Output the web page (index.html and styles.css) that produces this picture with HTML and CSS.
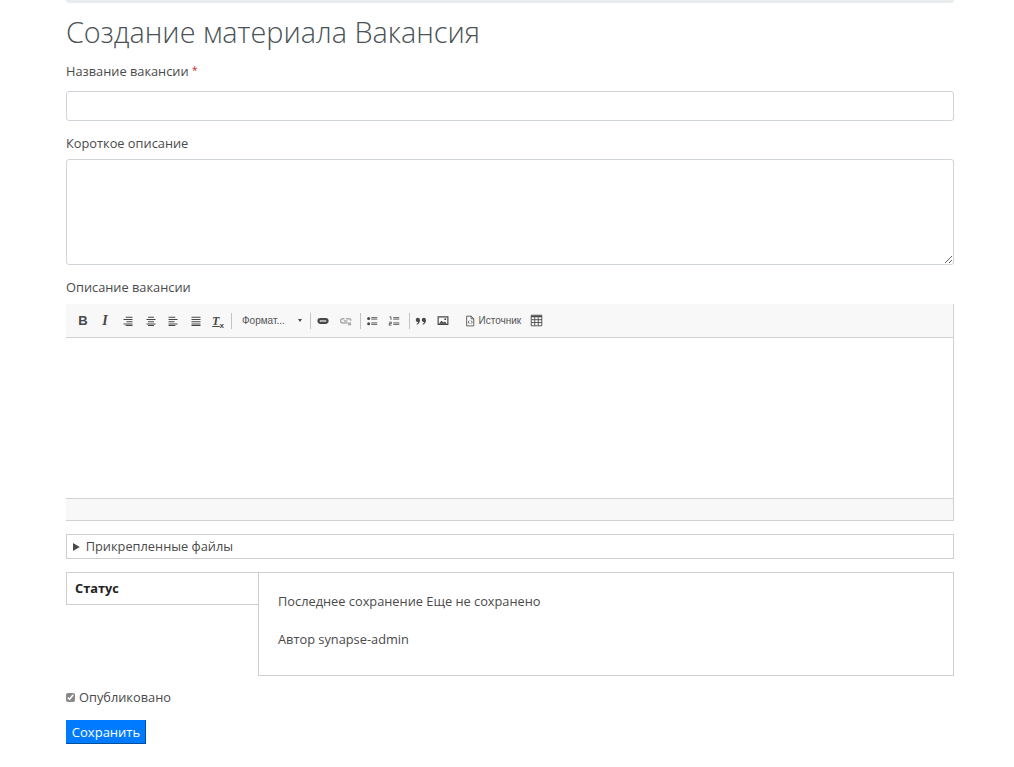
FILE: index.html
```html
<!DOCTYPE html>
<html lang="ru">
<head>
<meta charset="utf-8">
<title>Создание материала Вакансия</title>
<link rel="stylesheet" href="styles.css">
</head>
<body>
<main class="page">
  <div class="topbar"></div>
  <h1 class="title">Создание материала Вакансия</h1>
  <form class="form">
    <label class="label label-name" for="f-name">Название вакансии <span class="req">*</span></label>
    <input class="input" id="f-name" type="text">
    <label class="label label-short" for="f-short">Короткое описание</label>
    <textarea class="textarea" id="f-short"></textarea>
    <div class="label label-desc">Описание вакансии</div>
    <div class="editor">
      <div class="toolbar">
        <span class="tb tb-b">B</span>
        <span class="tb tb-i">I</span>
        <svg class="ic ic-first" viewBox="0 0 16 16"><path d="M5 3h9M2 6h12M6 9h8M2 12h12M5 14h9" class="ln"/></svg>
        <svg class="ic" viewBox="0 0 16 16"><path d="M4 3h8M2 6h12M4 9h8M2 12h12M4 14h8" class="ln"/></svg>
        <svg class="ic" viewBox="0 0 16 16"><path d="M2 3h9M2 6h12M2 9h8M2 12h12M2 14h9" class="ln"/></svg>
        <svg class="ic" viewBox="0 0 16 16"><path d="M2 3h12M2 6h12M2 9h12M2 12h12M2 14h12" class="ln"/></svg>
        <span class="tb tb-clear">T<sub class="tb-x">x</sub></span>
        <i class="sep sep-a"></i>
        <span class="combo">Формат...</span>
        <span class="caret"></span>
        <i class="sep sep-b"></i>
        <svg class="ic" viewBox="0 0 16 16"><path d="M4.500 5.500H11.500a2.500 2.500 0 0 1 0 5H4.500a2.500 2.500 0 0 1 0-5z" class="lk"/><path d="M5 8h6" class="lkm"/></svg>
        <svg class="ic ic-off" viewBox="0 0 16 16"><path d="M6 5H3.500a2.500 2.500 0 0 0 0 5.500h6.500M8 5h4a2.500 2.500 0 0 1 2.500 2.500M5 8h5M11 10l3.500 3.500M14.500 10L11 13.500" class="lk2"/></svg>
        <i class="sep sep-c"></i>
        <svg class="ic ic-list" viewBox="0 0 16 16"><circle cx="3.500" cy="4.500" r="2"/><circle cx="3.500" cy="11.500" r="2"/><path d="M7 3.500h8M7 5.500h8M7 10.500h8M7 12.500h8" class="thin"/></svg>
        <svg class="ic ic-list" viewBox="0 0 16 16"><path d="M2 2.500h2v4M1.500 9.500h3v2h-3v2h3" class="thin"/><path d="M7 3.500h8M7 5.500h8M7 10.500h8M7 12.500h8" class="thin"/></svg>
        <i class="sep sep-d"></i>
        <svg class="ic" viewBox="0 0 16 16"><circle cx="3.800" cy="6.500" r="2.800"/><path d="M6.600 6.500c0 3-1.500 5.500-4 6.500l-.6-1c1.500-.8 2-2 2-3.500z"/><circle cx="11.800" cy="6.500" r="2.800"/><path d="M14.600 6.500c0 3-1.500 5.500-4 6.500l-.6-1c1.500-.8 2-2 2-3.500z"/></svg>
        <svg class="ic ic-img" viewBox="0 0 16 16"><path d="M1.500 2.500h13v10h-13z" class="box"/><path d="M2.500 11.500l3.500-4 2.500 2.500 2-1.500 2.500 3z"/><circle cx="11" cy="5.500" r="1.300"/></svg>
        <svg class="ic ic-src" viewBox="0 0 16 16"><path d="M3.500 1.500h6l3.500 3.500v9.500h-9.500zM9.500 1.500v3.500h3.500" class="thin"/><path d="M7 7.500L5.500 9.500 7 11.500M9.500 7.500l1.500 2-1.500 2" class="thin"/></svg>
        <span class="srclabel">Источник</span>
        <svg class="ic ic-table" viewBox="0 0 16 16"><path d="M1.500 1.500h13v13h-13z" class="thin"/><path d="M1.500 2h13v2h-13z"/><path d="M1.500 7h13M1.500 10.500h13M5.800 4v10.500M10.200 4v10.500" class="thin"/></svg>
      </div>
      <div class="editor-body"></div>
      <div class="editor-foot"></div>
    </div>
    <details class="files"><summary class="files-sum">Прикрепленные файлы</summary></details>
    <div class="tabs">
      <div class="tab-col"><div class="tab">Статус</div></div>
      <div class="tab-pane">
        <p class="meta meta-first">Последнее сохранение Еще не сохранено</p>
        <p class="meta">Автор synapse-admin</p>
      </div>
    </div>
    <label class="check"><input class="checkbox" type="checkbox" checked> Опубликовано</label>
    <button class="save" type="button">Сохранить</button>
  </form>
</main>
</body>
</html>
```
FILE: styles.css
```css
* { box-sizing: border-box; }
html, body { margin: 0; padding: 0; background: #fff; }
body { font-family: "Open Sans", "Liberation Sans", sans-serif; font-size: 13px; color: #4a4a4a; overflow: hidden; }
.page { width: 888px; margin-left: 66px; }
.topbar { height: 3px; background: #e9ecef; border-radius: 0 0 3px 3px; }
.title { margin: 10px 0 0; font-size: 28.800px; font-weight: 300; line-height: 38px; color: #4a5256; }
.form { display: flex; flex-direction: column; align-items: stretch; }
.label { display: block; line-height: 18px; font-size: 12.800px; color: #4a4a4a; }
.label-name { margin-top: 11px; }
.label-short { margin-top: 13px; }
.label-desc { margin-top: 13px; }
.req { color: #c8252c; position: relative; top: -2px; font-size: 10px; }
.input { display: block; width: 100%; height: 30px; margin-top: 10px; border: 1px solid #ced4da; border-radius: 3px; background: #fff; }
.textarea { display: block; width: 100%; height: 106px; margin-top: 7px; border: 1px solid #ced4da; border-radius: 3px; background: #fff; }
.editor { margin-top: 8px; height: 217px; border-right: 1px solid #d1d1d1; border-bottom: 1px solid #d1d1d1; display: flex; flex-direction: column; }
.toolbar { height: 34px; flex: none; background: #f8f8f8; border-bottom: 1px solid #d1d1d1; display: flex; align-items: center; padding-left: 11px; color: #474747; }
.editor-body { flex: 1; background: #fff; }
.editor-foot { height: 22px; flex: none; background: #f8f8f8; border-top: 1px solid #d1d1d1; }
.tb { display: block; width: 12px; text-align: center; font-family: "Liberation Sans", sans-serif; font-weight: 700; color: #474747; line-height: 16px; }
.tb-b { font-size: 13px; margin-right: 10px; }
.tb-i { font-family: "Liberation Serif", serif; font-style: italic; font-size: 14px; margin-right: 10px; }
.tb-clear { font-family: "Liberation Serif", serif; font-style: italic; font-size: 12px; text-decoration: underline; margin-left: -1px; width: 14px; }
.tb-x { font-family: "Liberation Sans", sans-serif; font-style: normal; font-size: 8px; line-height: 0; }
.ic { display: block; width: 12px; height: 12px; flex: none; margin-right: 10.500px; fill: #474747; }
.ic-first { margin-left: 1px; }
.ln { fill: none; stroke: #474747; stroke-width: 1.400; }
.lk { fill: none; stroke: #474747; stroke-width: 3; }
.lkm { fill: none; stroke: #8a8a8a; stroke-width: 1.200; }
.lk2 { fill: none; stroke: #aaa; stroke-width: 2; }
.thin { fill: none; stroke: #474747; stroke-width: 1.100; }
.box { fill: none; stroke: #474747; stroke-width: 1.500; }
.sep { display: block; width: 1px; height: 16px; flex: none; background: #c4c4c4; }
.sep-a { margin-left: 6px; }
.combo { font-family: "Liberation Sans", sans-serif; font-size: 10px; color: #555; margin-left: 10px; width: 56px; }
.caret { width: 0; height: 0; border-left: 2.500px solid transparent; border-right: 2.500px solid transparent; border-top: 3px solid #474747; margin-right: 8px; }
.sep-b { margin-right: 6px; }
.sep-c { margin-left: -2px; margin-right: 5px; }
.sep-d { margin-left: -1px; margin-right: 5px; }
.ic-list { margin-right: 10px; }
.ic-img { margin-left: -1px; margin-right: 0; }
.ic-src { margin-left: 15px; margin-right: 3px; }
.srclabel { font-family: "Liberation Sans", sans-serif; font-size: 10px; color: #555; width: 42px; margin-right: 9px; }
.ic-table { width: 13px; height: 13px; }
.files { margin-top: 13px; height: 25px; border: 1px solid #cfcfcf; }
.files-sum { padding-left: 6px; line-height: 23px; font-size: 12.800px; color: #4a4a4a; }
.files-sum::marker { font-size: 12px; }
.tabs { margin-top: 13px; display: flex; height: 104px; }
.tab-col { width: 192px; flex: none; }
.tab { height: 33px; border: 1px solid #cfcfcf; border-right: 0; font-size: 12.800px; font-weight: 700; line-height: 31px; padding-left: 8px; color: #222; }
.tab-pane { flex: 1; border: 1px solid #cfcfcf; padding: 19px 19px; }
.meta { margin: 0 0 20px; font-size: 12.800px; line-height: 18px; color: #4a4a4a; }
.check { display: flex; align-items: center; margin-top: 12px; line-height: 18px; font-size: 12.800px; color: #4a4a4a; }
.checkbox { width: 9px; height: 9px; margin: 0 4px 0 0; accent-color: #888; }
.save { display: block; align-self: flex-start; width: 80px; height: 24px; margin-top: 14px; padding: 0 0 0 1px; border: 0; border-right: 1px solid #0050a0; border-bottom: 1px solid #0050a0; background: #007bff; color: #fff; font-family: "Open Sans", sans-serif; font-size: 13px; line-height: 22px; }
```
